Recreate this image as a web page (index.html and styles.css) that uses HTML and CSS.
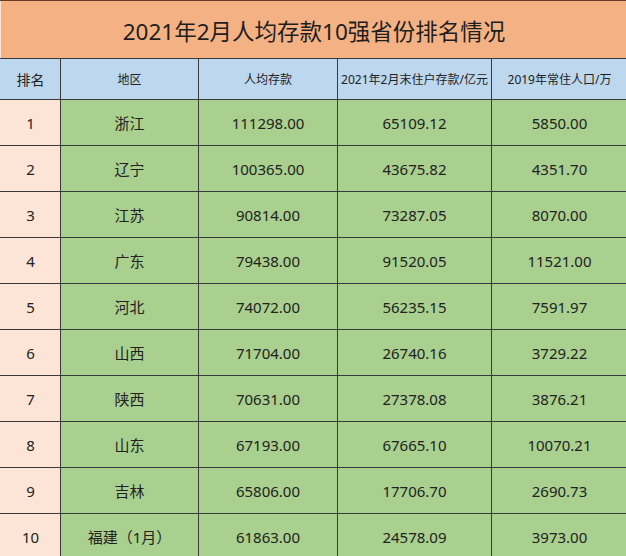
FILE: index.html
```html
<!DOCTYPE html>
<html lang="zh">
<head>
<meta charset="utf-8">
<link rel="stylesheet" href="styles.css">
</head>
<body>
<table class="sheet">
  <colgroup>
    <col class="c-rank"><col class="c-region"><col class="c-avg"><col class="c-dep"><col class="c-pop">
  </colgroup>
  <tr class="title-row"><td colspan="5">2021年2月人均存款10强省份排名情况</td></tr>
  <tr class="head-row">
    <td>排名</td><td>地区</td><td>人均存款</td><td>2021年2月末住户存款/亿元</td><td>2019年常住人口/万</td>
  </tr>
  <tr class="row"><td class="rank">1</td><td>浙江</td><td>111298.00</td><td>65109.12</td><td>5850.00</td></tr>
  <tr class="row"><td class="rank">2</td><td>辽宁</td><td>100365.00</td><td>43675.82</td><td>4351.70</td></tr>
  <tr class="row"><td class="rank">3</td><td>江苏</td><td>90814.00</td><td>73287.05</td><td>8070.00</td></tr>
  <tr class="row"><td class="rank">4</td><td>广东</td><td>79438.00</td><td>91520.05</td><td>11521.00</td></tr>
  <tr class="row"><td class="rank">5</td><td>河北</td><td>74072.00</td><td>56235.15</td><td>7591.97</td></tr>
  <tr class="row"><td class="rank">6</td><td>山西</td><td>71704.00</td><td>26740.16</td><td>3729.22</td></tr>
  <tr class="row"><td class="rank">7</td><td>陕西</td><td>70631.00</td><td>27378.08</td><td>3876.21</td></tr>
  <tr class="row"><td class="rank">8</td><td>山东</td><td>67193.00</td><td>67665.10</td><td>10070.21</td></tr>
  <tr class="row"><td class="rank">9</td><td>吉林</td><td>65806.00</td><td>17706.70</td><td>2690.73</td></tr>
  <tr class="row"><td class="rank">10</td><td>福建（1月）</td><td>61863.00</td><td>24578.09</td><td>3973.00</td></tr>
</table>
</body>
</html>
```
FILE: styles.css
```css
html, body {
  margin: 0;
  padding: 0;
  background: #a9d08e;
}
body {
  width: 626px;
  height: 556px;
  overflow: hidden;
  font-family: "Noto Sans", "Noto Sans CJK SC", sans-serif;
  color: #222;
}
.sheet {
  border-collapse: collapse;
  table-layout: fixed;
  width: 627px;
}
.c-rank { width: 60px; }
.c-region { width: 138px; }
.c-avg { width: 139px; }
.c-dep { width: 154px; }
.c-pop { width: 136px; }
.sheet td {
  border: 1px solid #3a3a3a;
  text-align: center;
  padding: 0;
  white-space: nowrap;
}
.title-row td {
  height: 56px;
  padding-top: 1px;
  background: #f4b183;
  font-size: 22.5px;
  color: #1e1e1e;
  border-top-color: #6b3a2a;
  border-left-color: #f4b183;
  border-right-color: #f4b183;
}
.head-row td {
  height: 40px;
  background: #bdd7ee;
  font-size: 12px;
}
.head-row td:first-child {
  font-size: 14px;
}
.row td {
  height: 45px;
  background: #a9d08e;
  font-size: 15px;
}
.row td.rank {
  background: #fce4d6;
}
.sheet td:first-child { border-left-color: #fce4d6; }
.head-row td:first-child { border-left-color: #bdd7ee; }
```
